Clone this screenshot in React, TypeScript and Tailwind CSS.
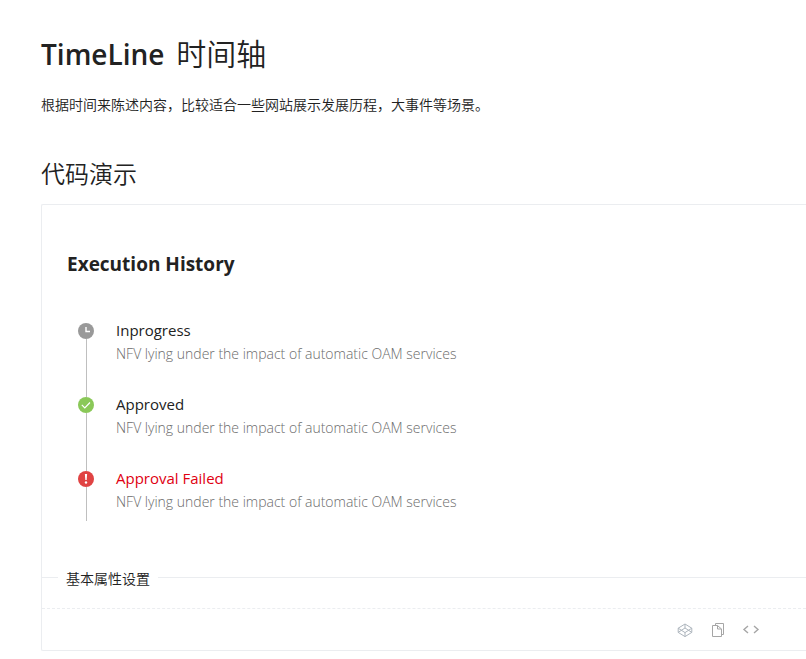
import type { ReactNode } from "react";

type Status = "progress" | "approved" | "failed";

interface Entry {
  status: Status;
  title: string;
  detail: string;
}

const detail = "NFV lying under the impact of automatic OAM services";

const entries: Entry[] = [
  { status: "progress", title: "Inprogress", detail },
  { status: "approved", title: "Approved", detail },
  { status: "failed", title: "Approval Failed", detail },
];

function StatusIcon({ status }: { status: Status }) {
  return (
    <svg viewBox="0 0 16 16" className="block size-4 shrink-0" fill="none" stroke="#fff" aria-hidden="true">
      {status === "progress" && (
        <>
          <circle cx="8" cy="8" r="8" fill="#999" stroke="none" />
          <path d="M8 4v4.5h4" strokeWidth="1.4" />
        </>
      )}
      {status === "approved" && (
        <>
          <circle cx="8" cy="8" r="8" fill="#8ac858" stroke="none" />
          <path d="M3.8 7.8l3 3 5.2-5.3" strokeWidth="1.2" />
        </>
      )}
      {status === "failed" && (
        <>
          <circle cx="8" cy="8" r="8" fill="#e04343" stroke="none" />
          <path d="M6.9 3h2.2l-.4 6H7.3z" fill="#fff" stroke="none" />
          <circle cx="8" cy="11.5" r="1.2" fill="#fff" stroke="none" />
        </>
      )}
    </svg>
  );
}

function TimelineItem({ entry }: { entry: Entry }) {
  const failed = entry.status === "failed";
  return (
    <li className="flex h-[74px] last:h-[50px]">
      <div className="flex w-4 flex-col items-center">
        <StatusIcon status={entry.status} />
        <span className="w-px flex-1 bg-[#bfbfbf]" />
      </div>
      <div className="ml-[22px]">
        <h4 className={failed ? "text-[15px] leading-[14px] text-[#e00011]" : "text-[15px] leading-[14px] text-[#222]"}>
          {entry.title}
        </h4>
        <p className="mt-[7px] text-sm leading-5 font-light text-[#6b6b6b]">{entry.detail}</p>
      </div>
    </li>
  );
}

function IconButton({ label, children }: { label: string; children: ReactNode }) {
  return (
    <button type="button" aria-label={label} className="flex size-4 items-center justify-center text-[#a6a6a6]">
      {children}
    </button>
  );
}

export default function App() {
  return (
    <main className="overflow-hidden bg-white pt-8 pb-2 pl-[41px] font-['Open_Sans','Noto_Sans_CJK_SC',sans-serif] text-[#222]">
      <h1 className="text-[30px] leading-[44px] font-[350]">
        <span className="text-[28px] font-semibold">TimeLine</span> <span className="ml-1">时间轴</span>
      </h1>
      <p className="mt-[18px] text-sm leading-[22px] font-[350]">
        根据时间来陈述内容，比较适合一些网站展示发展历程，大事件等场景。
      </p>
      <h2 className="mt-10 text-2xl leading-9 font-[350]">代码演示</h2>

      <section className="mt-3 rounded-l-xs border border-r-0 border-[#ebedf0]">
        <div className="px-[25px] pt-[47px]">
          <h3 className="text-[19px] leading-6 font-bold">Execution History</h3>
          <ul className="mt-[47px] pl-[11px]">
            {entries.map((entry) => (
              <TimelineItem key={entry.title} entry={entry} />
            ))}
          </ul>
        </div>

        <div className="mt-[45px] flex h-[22px] items-center">
          <span className="h-px w-4 bg-[#ebedf0]" />
          <h4 className="px-2 pt-1 text-sm leading-[22px] font-[350]">基本属性设置</h4>
          <span className="h-px flex-1 bg-[#ebedf0]" />
        </div>

        <div className="mt-5 flex h-[42px] items-center justify-end gap-[17px] border-t border-dashed border-[#ebedf0] pr-[47px]">
          <IconButton label="CodePen">
            <svg viewBox="0 0 16 16" className="size-4 shrink-0 text-[#adb5bd]" fill="none" stroke="currentColor" strokeWidth="1" strokeLinejoin="round">
              <path d="M8 2l6.8 4.2v4.2L8 14.6 1.2 10.4V6.2zM1.2 6.2L8 10.6l6.8-4.4M1.2 10.4L8 6l6.8 4.4M8 2v4M8 10.6v4" />
            </svg>
          </IconButton>
          <IconButton label="Copy code">
            <svg viewBox="0 0 16 16" className="size-4 shrink-0" fill="none" stroke="currentColor" strokeWidth="1">
              <path d="M5.5 3.5v-2h8v11h-2M2.5 3.5h5l4 3.500v7.500h-9zM7.500 3.500v3.500h4" />
            </svg>
          </IconButton>
          <IconButton label="Show code">
            <svg viewBox="0 0 18 16" className="h-4 w-[18px] shrink-0" fill="none" stroke="currentColor" strokeWidth="1.4">
              <path d="M6 4L2 7.500l4 3.500M12 4L16 7.500l-4 3.500" />
            </svg>
          </IconButton>
        </div>
      </section>
    </main>
  );
}
